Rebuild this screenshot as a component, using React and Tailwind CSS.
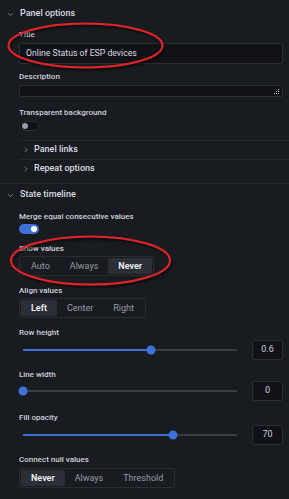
import React from 'react';
import { ChevronDown, ChevronRight } from 'lucide-react';

const Label = ({ children, className = '' }) => (
  <div className={`h-[10px] text-[8px] leading-[10px] font-medium text-[#d0d1dc] ${className}`}>{children}</div>
);

const Toggle = ({ on }) => (
  <div
    className={`flex h-[10px] w-[20px] items-center rounded-full px-[2px] ${
      on ? 'justify-end bg-[#3d71d9]' : 'border border-[#2c2f35] bg-[#111217]'
    }`}
  >
    <span className={`h-[6px] w-[6px] rounded-full ${on ? 'bg-white' : 'bg-[#9a9ca6]'}`} />
  </div>
);

const Radio = ({ options, active }) => (
  <div className="flex h-[20px] w-fit items-stretch rounded-[2px] border border-[#2a2d33] p-[1px] leading-none">
    {options.map((o) => (
      <div
        key={o}
        className={`flex items-center rounded-[2px] px-[10px] text-[9px] ${
          o === active ? 'bg-[#2c2f36] font-semibold text-[#f0f0f5]' : 'text-[#9a9ca6]'
        }`}
      >
        {o}
      </div>
    ))}
  </div>
);

const Slider = ({ pct, value }) => (
  <div className="flex h-[20px] items-center">
    <div className="relative ml-[4px] mr-[15px] h-[2px] flex-1 bg-[#3b3e45]">
      <div className="h-full bg-[#3d71d9]" style={{ width: `${pct}%` }} />
      <div
        className="absolute top-1/2 h-[9px] w-[9px] -translate-x-1/2 -translate-y-1/2 rounded-full bg-[#3d71d9]"
        style={{ left: `${pct}%` }}
      />
    </div>
    <div className="flex h-[20px] w-[31px] items-center justify-center rounded-[2px] border border-[#2c2f35] bg-[#111217] text-[9px] text-[#ccccdc]">
      {value}
    </div>
  </div>
);

const SectionHeader = ({ children, className = '' }) => (
  <div className={`flex h-[22px] items-center pl-[6px] text-[9px] font-medium text-[#d8d9e0] ${className}`}>
    <ChevronDown size={9} strokeWidth={2} className="mr-[5px] text-[#9a9ca6]" />
    {children}
  </div>
);

const SubRow = ({ children, className = '' }) => (
  <div className={`flex items-center text-[9px] font-medium text-[#d8d9e0] ${className}`}>
    <ChevronRight size={8} strokeWidth={2} className="ml-[3px] mr-[4px] text-[#9a9ca6]" />
    {children}
  </div>
);

export default function App() {
  return (
    <div className="relative h-[499px] w-[289px] overflow-hidden bg-[#181b1f] font-['Roboto',sans-serif]">
      {/* Panel options */}
      <SectionHeader className="mt-[3px]">Panel options</SectionHeader>
      <div className="pl-[19px]">
        <div className="pr-[6px]">
          <Label className="mt-[5px] mb-[3px]">Title</Label>
          <div className="flex h-[21px] items-center rounded-[2px] border border-[#2c2f35] bg-[#111217] pl-[6px] text-[8.7px] text-[#d8d9e0]">
            Online Status of ESP devices
          </div>

          <Label className="mt-[8px] mb-[3px]">Description</Label>
          <div className="flex h-[12px] items-end justify-end rounded-[2px] border border-[#2c2f35] bg-[#111217] pr-[2px] pb-[1px]">
            <svg width="6" height="6" viewBox="0 0 6 6">
              <rect x="4" y="0" width="1" height="1" fill="#c8c9d0" />
              <rect x="2" y="2" width="1" height="1" fill="#c8c9d0" />
              <rect x="4" y="2" width="1" height="1" fill="#c8c9d0" />
              <rect x="0" y="4" width="1" height="1" fill="#c8c9d0" />
              <rect x="2" y="4" width="1" height="1" fill="#c8c9d0" />
              <rect x="4" y="4" width="1" height="1" fill="#c8c9d0" />
            </svg>
          </div>

          <Label className="mt-[11px] mb-[3px]">Transparent background</Label>
          <Toggle on={false} />
        </div>

        <div className="mt-[9px] border-t border-[#25282e]">
          <SubRow className="h-[19px] border-b border-[#25282e]">Panel links</SubRow>
          <SubRow className="mb-[5px] h-[18px]">Repeat options</SubRow>
        </div>
      </div>

      {/* State timeline */}
      <div className="border-t border-[#25282e]">
        <SectionHeader>State timeline</SectionHeader>
        <div className="pl-[19px] pr-[6px]">
          <Label className="mt-[6px] mb-[2px]">Merge equal consecutive values</Label>
          <Toggle on />

          <Label className="mt-[10px] mb-[2px]">Show values</Label>
          <Radio options={['Auto', 'Always', 'Never']} active="Never" />

          <Label className="mt-[10px] mb-[2px]">Align values</Label>
          <Radio options={['Left', 'Center', 'Right']} active="Left" />

          <Label className="mt-[10px] mb-[2px]">Row height</Label>
          <Slider pct={60} value="0.6" />

          <Label className="mt-[10px] mb-[1px]">Line width</Label>
          <Slider pct={0} value="0" />

          <Label className="mt-[12px] mb-[2px]">Fill opacity</Label>
          <Slider pct={70} value="70" />

          <Label className="mt-[10px] mb-[3px]">Connect null values</Label>
          <Radio options={['Never', 'Always', 'Threshold']} active="Never" />
        </div>
      </div>

      {/* red annotation ellipses */}
      <svg className="pointer-events-none absolute inset-0" width="289" height="499">
        <defs>
          <filter id="sh" x="-20%" y="-40%" width="140%" height="180%">
            <feDropShadow dx="1.5" dy="2" stdDeviation="1.2" floodColor="#000" floodOpacity="0.7" />
          </filter>
        </defs>
        <ellipse cx="85.5" cy="45.5" rx="77" ry="22" fill="none" stroke="#e3242b" strokeWidth="2" filter="url(#sh)" />
        <ellipse cx="90.5" cy="260.5" rx="79.5" ry="24" fill="none" stroke="#e3242b" strokeWidth="2" filter="url(#sh)" />
      </svg>
    </div>
  );
}
